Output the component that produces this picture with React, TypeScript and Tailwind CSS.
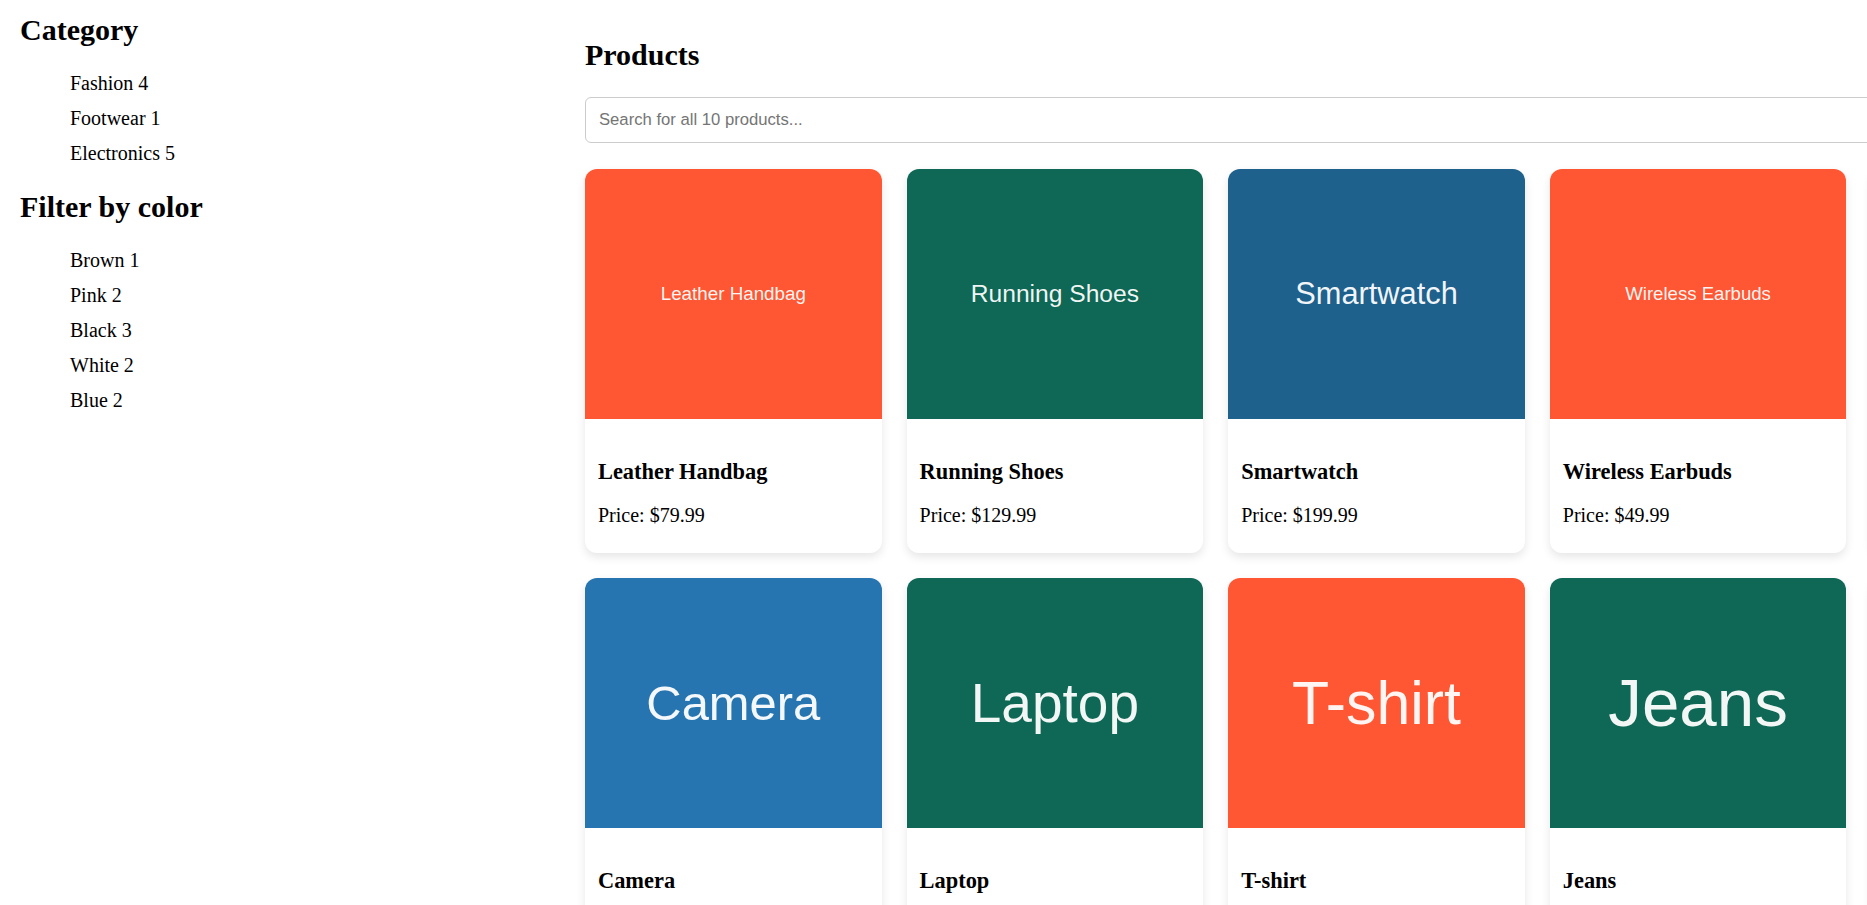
import React from "react";

type Product = {
  name: string;
  price: string;
  bg: string;
  label: string;
  labelSize: string;
};

const products: Product[] = [
  { name: "Leather Handbag", price: "$79.99", bg: "bg-[#ff5733]", label: "Leather Handbag", labelSize: "text-[18.8px]" },
  { name: "Running Shoes", price: "$129.99", bg: "bg-[#0f6856]", label: "Running Shoes", labelSize: "text-[24.6px]" },
  { name: "Smartwatch", price: "$199.99", bg: "bg-[#1f618d]", label: "Smartwatch", labelSize: "text-[30.8px]" },
  { name: "Wireless Earbuds", price: "$49.99", bg: "bg-[#ff5733]", label: "Wireless Earbuds", labelSize: "text-[18.6px]" },
  { name: "Sunglasses", price: "$59.99", bg: "bg-[#1f618d]", label: "Sunglasses", labelSize: "text-[30px]" },
  { name: "Camera", price: "$499.99", bg: "bg-[#2775b0]", label: "Camera", labelSize: "text-[48.9px]" },
  { name: "Laptop", price: "$999.99", bg: "bg-[#0f6856]", label: "Laptop", labelSize: "text-[55px]" },
  { name: "T-shirt", price: "$19.99", bg: "bg-[#ff5733]", label: "T-shirt", labelSize: "text-[60.8px]" },
  { name: "Jeans", price: "$39.99", bg: "bg-[#0f6856]", label: "Jeans", labelSize: "text-[67.3px]" },
  { name: "Headphones", price: "$89.99", bg: "bg-[#2775b0]", label: "Headphones", labelSize: "text-[30px]" },
];

const categories = ["Fashion 4", "Footwear 1", "Electronics 5"];
const colors = ["Brown 1", "Pink 2", "Black 3", "White 2", "Blue 2"];

function Card({ p }: { p: Product }) {
  return (
    <div className="bg-white rounded-[12px] overflow-hidden shadow-[0_4px_10px_rgba(0,0,0,0.1)]">
      <div className={`${p.bg} h-[250px] flex items-center justify-center`}>
        <span
          className={`${p.labelSize} text-white/95 font-['Liberation_Sans',Arial,sans-serif] leading-none whitespace-nowrap`}
        >
          {p.label}
        </span>
      </div>
      <div className="pt-[40px] px-[13px] pb-[26px]">
        <h3 className="text-[22.4px] font-bold leading-[26px] mb-[19px]">{p.name}</h3>
        <p className="text-[20px] leading-[23px]">Price: {p.price}</p>
      </div>
    </div>
  );
}

export default function App() {
  return (
    <div className="h-screen w-full overflow-hidden bg-white text-black font-['Liberation_Serif','Times_New_Roman',serif]">
      <div className="flex w-[2170px]">
        <aside className="w-[585px] shrink-0 pl-[20px] pt-[13px]">
          <h2 className="text-[30px] font-bold leading-[34px] mb-[19px]">Category</h2>
          <ul className="pl-[50px]">
            {categories.map((c) => (
              <li key={c} className="text-[20px] leading-[35px]">
                {c}
              </li>
            ))}
          </ul>
          <h2 className="text-[30px] font-bold leading-[34px] mt-[19px] mb-[19px]">Filter by color</h2>
          <ul className="pl-[50px]">
            {colors.map((c) => (
              <li key={c} className="text-[20px] leading-[35px]">
                {c}
              </li>
            ))}
          </ul>
        </aside>
        <main className="w-[1583px] shrink-0 pt-[38px]">
          <h2 className="text-[30px] font-bold leading-[34px]">Products</h2>
          <input
            type="text"
            placeholder="Search for all 10 products..."
            className="mt-[25px] block w-full h-[46px] border border-[#cccccc] rounded-[6px] px-[13px] text-[16.67px] font-['Liberation_Sans',Arial,sans-serif] placeholder:text-[#757575] outline-none"
          />
          <div className="mt-[26px] grid grid-cols-[repeat(5,296.6px)] gap-[25px]">
            {products.map((p) => (
              <Card key={p.name} p={p} />
            ))}
          </div>
        </main>
      </div>
    </div>
  );
}
